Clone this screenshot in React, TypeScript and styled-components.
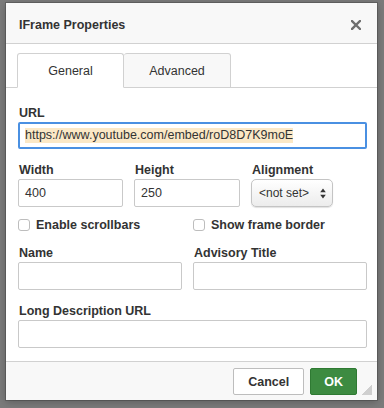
import React from 'react';
import styled, { createGlobalStyle } from 'styled-components';

const GlobalStyle = createGlobalStyle`
  html, body {
    margin: 0;
    padding: 0;
    background: #7b7b7b;
  }
  body {
    font-family: "Liberation Sans", Arial, sans-serif;
    color: #333;
  }
`;

const Page = styled.div`
  padding: 3px 0 0 6px;
  height: 408px;
  box-sizing: border-box;
`;

const Dialog = styled.div`
  position: relative;
  width: 371px;
  height: 397px;
  background: #fff;
  box-shadow: 0 0 0 1px rgba(0, 0, 0, 0.18), 0 2px 8px rgba(0, 0, 0, 0.25);
  display: flex;
  flex-direction: column;
`;

const TitleBar = styled.div`
  height: 41px;
  box-sizing: border-box;
  background: #f8f8f8;
  border-bottom: 1px solid #d1d1d1;
  display: flex;
  align-items: center;
  justify-content: space-between;
  padding: 3px 16px 0 13px;
`;

const Title = styled.div`
  font-size: 12.5px;
  font-weight: bold;
  color: #333;
`;

const CloseButton = styled.div`
  width: 10px;
  height: 10px;
  display: flex;
  margin-top: 1px;
`;

const TabBar = styled.div`
  display: flex;
  padding: 9px 0 0 11px;
  border-bottom: 1px solid #d1d1d1;
`;

interface ITab {
  active?: boolean;
}

const Tab = styled.div<ITab>`
  width: 107px;
  height: 35px;
  box-sizing: border-box;
  margin-bottom: -1px;
  border: 1px solid #d1d1d1;
  border-bottom-color: ${props => (props.active ? '#fff' : '#d1d1d1')};
  border-left-width: ${props => (props.active ? '1px' : '0')};
  border-radius: 3px 3px 0 0;
  background: ${props => (props.active ? '#fff' : '#f8f8f8')};
  font-size: 12.5px;
  color: #333;
  display: flex;
  align-items: center;
  justify-content: center;
`;

const Body = styled.div`
  flex: 1;
  padding: 16px 10px 0 12px;
`;

const Label = styled.div`
  font-size: 12.5px;
  font-weight: bold;
  line-height: 18px;
  height: 18px;
  padding-left: 1px;
  color: #333;
`;

interface IInput {
  focused?: boolean;
}

const Input = styled.div<IInput>`
  height: ${props => (props.focused ? '27px' : '28px')};
  box-sizing: border-box;
  border: ${props => (props.focused ? '2px solid #4a90e2' : '1px solid #c9c9c9')};
  border-radius: 2px;
  padding-left: ${props => (props.focused ? '5px' : '6px')};
  display: flex;
  align-items: center;
  font-size: 12.5px;
  color: #333;
  background: #fff;
`;

const Selected = styled.span`
  background: #fbe8c6;
  line-height: 15px;
`;

const Field = styled.div`
  display: flex;
  flex-direction: column;
`;

interface IRow {
  columns: string;
  top: number;
}

const Row = styled.div<IRow>`
  display: grid;
  grid-template-columns: ${props => props.columns};
  column-gap: 11px;
  margin-top: ${props => props.top}px;
`;

const Select = styled.div`
  width: 82px;
  height: 28px;
  box-sizing: border-box;
  border: 1px solid #c4c4c4;
  border-radius: 5px;
  background: linear-gradient(#ffffff, #ececec);
  box-shadow: 0 1px 1px rgba(0, 0, 0, 0.12);
  display: flex;
  align-items: center;
  justify-content: space-between;
  padding: 0 6px 0 7px;
  font-size: 12px;
  color: #333;
`;

const CheckRow = styled.label`
  display: flex;
  align-items: center;
  height: 12px;
  font-size: 12.5px;
  font-weight: bold;
  color: #333;
`;

const CheckBox = styled.span`
  width: 12px;
  height: 12px;
  box-sizing: border-box;
  border: 1px solid #bdbdbd;
  border-radius: 3px;
  background: #fff;
  margin-right: 6px;
`;

const Footer = styled.div`
  height: 39px;
  box-sizing: border-box;
  border-top: 1px solid #d1d1d1;
  background: #f8f8f8;
  display: flex;
  justify-content: flex-end;
  align-items: flex-start;
  gap: 6px;
  padding: 6px 20px 0 0;
`;

interface IButton {
  primary?: boolean;
}

const Button = styled.div<IButton>`
  height: 27px;
  box-sizing: border-box;
  padding: 0 ${props => (props.primary ? '13px' : '14px')};
  border: 1px solid ${props => (props.primary ? '#2f7a33' : '#bdbdbd')};
  border-radius: 2px;
  background: ${props => (props.primary ? '#3d8b41' : '#fff')};
  color: ${props => (props.primary ? '#fff' : '#333')};
  font-size: 12.5px;
  font-weight: bold;
  display: flex;
  align-items: center;
`;

const Grip = styled.div`
  position: absolute;
  right: 5px;
  bottom: 5px;
  width: 10px;
  height: 10px;
  background: linear-gradient(135deg, transparent 50%, #cfcfcf 50%);
`;

const App = () => (
  <>
    <GlobalStyle />
    <Page>
      <Dialog>
        <TitleBar>
          <Title>IFrame Properties</Title>
          <CloseButton>
            <svg width="10" height="10" viewBox="0 0 10 10">
              <path d="M1 1 L9 9 M9 1 L1 9" stroke="#6f6f6f" strokeWidth="2.4" strokeLinecap="square" />
            </svg>
          </CloseButton>
        </TitleBar>
        <TabBar>
          <Tab active>General</Tab>
          <Tab>Advanced</Tab>
        </TabBar>
        <Body>
          <Field>
            <Label>URL</Label>
            <Input focused>
              <Selected>https://www.youtube.com/embed/roD8D7K9moE</Selected>
            </Input>
          </Field>
          <Row columns="105px 106px auto" top={12}>
            <Field>
              <Label>Width</Label>
              <Input>400</Input>
            </Field>
            <Field>
              <Label>Height</Label>
              <Input>250</Input>
            </Field>
            <Field>
              <Label>Alignment</Label>
              <Select>
                <span>&lt;not set&gt;</span>
                <svg width="6" height="11" viewBox="0 0 6 11">
                  <path d="M3 0.5 L5.8 4.2 L0.2 4.2 Z M3 10.5 L5.8 6.8 L0.2 6.8 Z" fill="#333" />
                </svg>
              </Select>
            </Field>
          </Row>
          <Row columns="164px 1fr" top={12}>
            <CheckRow>
              <CheckBox />
              Enable scrollbars
            </CheckRow>
            <CheckRow>
              <CheckBox />
              Show frame border
            </CheckRow>
          </Row>
          <Row columns="164px 1fr" top={13}>
            <Field>
              <Label>Name</Label>
              <Input />
            </Field>
            <Field>
              <Label>Advisory Title</Label>
              <Input />
            </Field>
          </Row>
          <Row columns="1fr" top={12}>
            <Field>
              <Label>Long Description URL</Label>
              <Input />
            </Field>
          </Row>
        </Body>
        <Footer>
          <Button>Cancel</Button>
          <Button primary>OK</Button>
        </Footer>
        <Grip />
      </Dialog>
    </Page>
  </>
);

export default App;
